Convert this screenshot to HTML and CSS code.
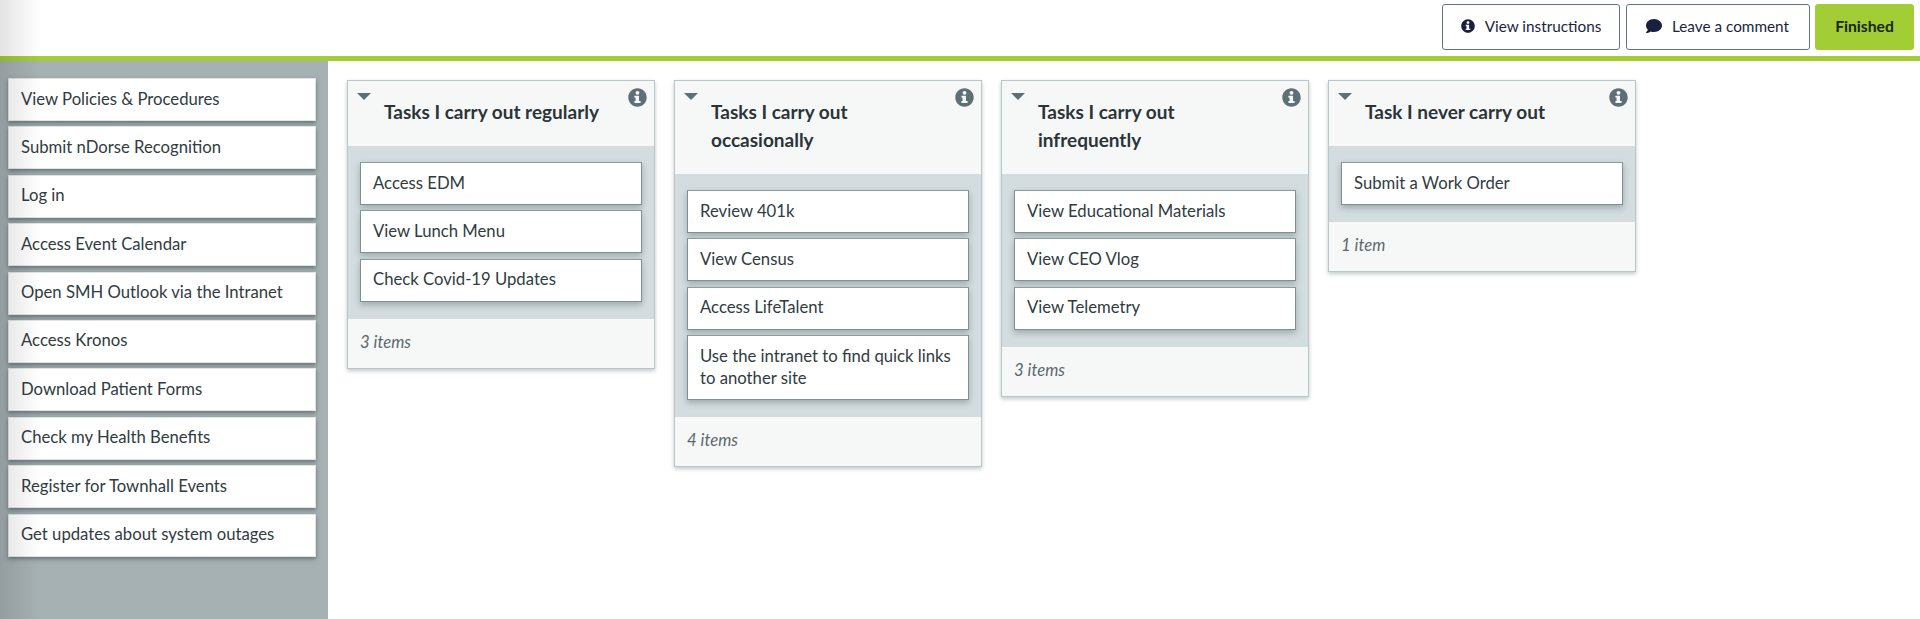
FILE: index.html
```html
<!DOCTYPE html>
<html lang="en">
<head>
<meta charset="utf-8">
<title>Card sort</title>
<link rel="stylesheet" href="styles.css">
</head>
<body>
<svg class="defs" width="0" height="0" aria-hidden="true">
  <symbol id="i-info" viewBox="0 0 512 512"><path d="M256 8C119 8 8 119 8 256s111 248 248 248 248-111 248-248S393 8 256 8zm0 70a52 52 0 1 1 0 104 52 52 0 0 1 0-104zM340 392c0 7-5 12-12 12H184c-7 0-12-5-12-12v-28c0-7 5-12 12-12h20v-88h-20c-7 0-12-5-12-12v-28c0-7 5-12 12-12h100c7 0 12 5 12 12v128h32c7 0 12 5 12 12v28z"/></symbol>
  <symbol id="i-comment" viewBox="0 0 512 512"><path d="M256 32C115 32 0 125 0 240c0 50 22 95 58 131-13 51-55 96-55 97-3 3-4 7-2 10 1 3 4 5 8 5 66 0 116-32 141-51 33 12 69 19 106 19 141 0 256-93 256-208S397 32 256 32z"/></symbol>
</svg>
<div class="shade"></div>
<header class="topbar">
  <button class="btn btn-outline"><svg class="btn-icon"><use href="#i-info"/></svg>View instructions</button>
  <button class="btn btn-outline btn-comment"><svg class="btn-icon"><use href="#i-comment"/></svg>Leave a comment</button>
  <button class="btn btn-finish">Finished</button>
</header>
<main class="layout">
  <aside class="sidebar">
    <div class="item">View Policies &amp; Procedures</div>
    <div class="item">Submit nDorse Recognition</div>
    <div class="item">Log in</div>
    <div class="item">Access Event Calendar</div>
    <div class="item">Open SMH Outlook via the Intranet</div>
    <div class="item">Access Kronos</div>
    <div class="item">Download Patient Forms</div>
    <div class="item">Check my Health Benefits</div>
    <div class="item">Register for Townhall Events</div>
    <div class="item">Get updates about system outages</div>
  </aside>
  <section class="board">
    <article class="card">
      <div class="card-head"><span class="caret"></span><h2>Tasks I carry out regularly</h2><svg class="card-info"><use href="#i-info"/></svg></div>
      <div class="lane">
        <div class="item">Access EDM</div>
        <div class="item">View Lunch Menu</div>
        <div class="item">Check Covid-19 Updates</div>
      </div>
      <div class="card-foot">3 items</div>
    </article>
    <article class="card">
      <div class="card-head"><span class="caret"></span><h2>Tasks I carry out occasionally</h2><svg class="card-info"><use href="#i-info"/></svg></div>
      <div class="lane">
        <div class="item">Review 401k</div>
        <div class="item">View Census</div>
        <div class="item">Access LifeTalent</div>
        <div class="item">Use the intranet to find quick links to another site</div>
      </div>
      <div class="card-foot">4 items</div>
    </article>
    <article class="card">
      <div class="card-head"><span class="caret"></span><h2>Tasks I carry out infrequently</h2><svg class="card-info"><use href="#i-info"/></svg></div>
      <div class="lane">
        <div class="item">View Educational Materials</div>
        <div class="item">View CEO Vlog</div>
        <div class="item">View Telemetry</div>
      </div>
      <div class="card-foot">3 items</div>
    </article>
    <article class="card">
      <div class="card-head"><span class="caret"></span><h2>Task I never carry out</h2><svg class="card-info"><use href="#i-info"/></svg></div>
      <div class="lane">
        <div class="item">Submit a Work Order</div>
      </div>
      <div class="card-foot">1 item</div>
    </article>
  </section>
</main>
</body>
</html>
```
FILE: styles.css
```css
* { box-sizing: border-box; }
html, body { margin: 0; height: 100%; overflow: hidden; }
body {
  font-family: "Lato", "Open Sans", sans-serif;
  font-size: 16.7px;
  color: #2f3c42;
  background: #fff;
  position: relative;
}
.defs { position: absolute; }
.shade {
  position: absolute;
  left: 0; top: 0; bottom: 0;
  width: 40px;
  background: linear-gradient(to right, rgba(0,0,0,.11), rgba(0,0,0,0));
  pointer-events: none;
  z-index: 5;
}
.topbar {
  height: 61px;
  border-bottom: 5px solid #a2cd34;
  display: flex;
  justify-content: flex-end;
  align-items: flex-start;
  padding: 4px 6px 0 0;
  gap: 5.5px;
}
.btn {
  height: 46px;
  font: inherit;
  font-size: 15.3px;
  color: #1a1f3d;
  border-radius: 3px;
  display: flex;
  align-items: center;
  justify-content: center;
  background: #fff;
  padding: 0 0 2px;
}
.btn-outline { width: 178px; border: 1px solid #5f7689; }
.btn-comment { width: 184px; }
.btn-icon { width: 14px; height: 14px; margin-right: 10px; fill: #1a1f3d; }
.btn-comment .btn-icon { width: 16px; height: 16px; }
.btn-finish { width: 99px; border: 1px solid #a2cd34; background: #a2cd34; font-size: 15.7px; font-weight: 700; color: #16261a; }
.layout { display: flex; height: 558px; }
.sidebar {
  width: 328px;
  flex: none;
  background: #a6b1b3;
  padding: 17px 12px 0 8px;
  display: flex;
  flex-direction: column;
  gap: 5.4px;
}
.item {
  background: #fff;
  border: 1px solid #7f8f94;
  border-top-color: #8e9ca0;
  padding: 8.5px 12px 10.5px;
  line-height: 22px;
  min-height: 43px;
  box-shadow: 0 3px 6px rgba(40,55,60,.3);
}
.sidebar .item { border-color: #dfe4e5; box-shadow: 0 2px 4px rgba(40,55,60,.5); }
.board { display: flex; align-items: flex-start; gap: 19px; padding: 19px 0 0 19px; }
.card {
  width: 308px;
  background: #f6f8f8;
  border: 1px solid #b7c6c9;
  box-shadow: 0 2px 4px rgba(60,75,80,.3);
}
.card-head {
  position: relative;
  padding: 17px 38px 20px 36px;
  min-height: 65px;
}
.card-head h2 { margin: 0; font-size: 19px; font-weight: 700; line-height: 28px; color: #2b3438; }
.caret {
  position: absolute;
  left: 9px; top: 12px;
  border-left: 7.5px solid transparent;
  border-right: 7.5px solid transparent;
  border-top: 7px solid #5f6f76;
}
.card-info { position: absolute; right: 7px; top: 7px; width: 19px; height: 19px; fill: #5f6f76; }
.lane {
  background: #d3dcdf;
  padding: 16px 12px 17px;
  display: flex;
  flex-direction: column;
  gap: 5.4px;
}
.card-foot { padding: 12px 12px 15px; font-style: italic; line-height: 22px; color: #59686e; }
```
